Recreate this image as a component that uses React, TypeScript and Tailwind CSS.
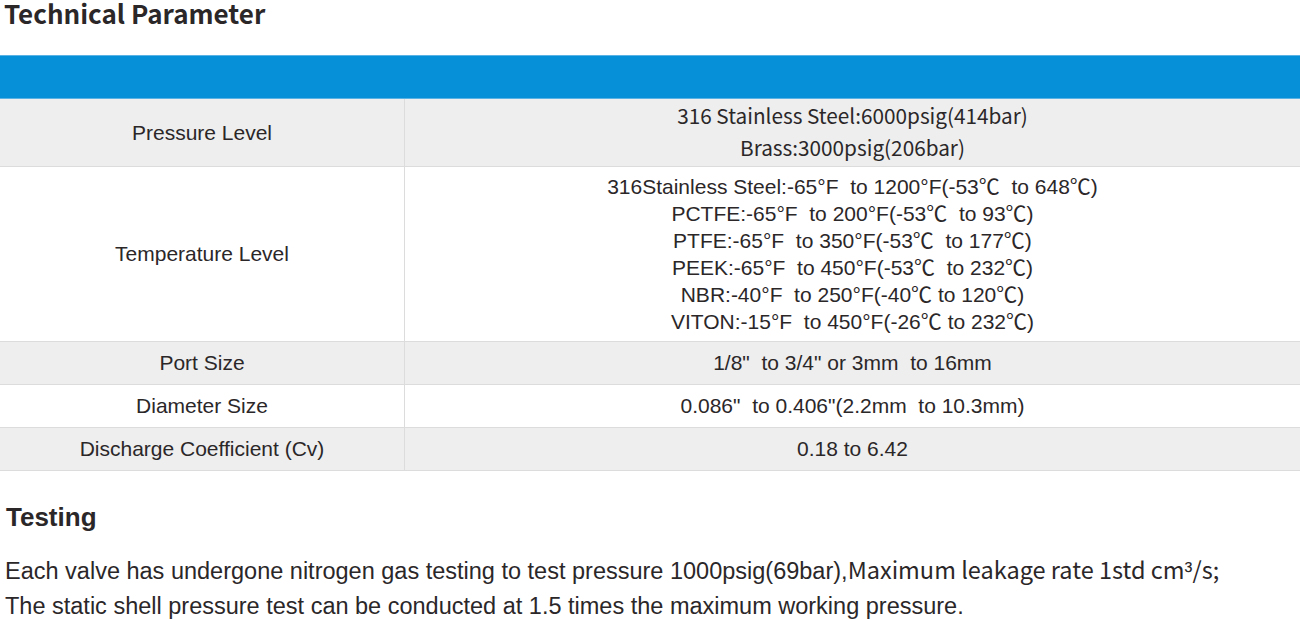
const arial = "font-['Liberation_Sans','Noto_Sans_CJK_SC',sans-serif]";
const noto = "font-['Noto_Sans_CJK_SC','Noto_Sans',sans-serif]";

const tempLines = [
  "316Stainless Steel:-65°F  to 1200°F(-53℃  to 648℃)",
  "PCTFE:-65°F  to 200°F(-53℃  to 93℃)",
  "PTFE:-65°F  to 350°F(-53℃  to 177℃)",
  "PEEK:-65°F  to 450°F(-53℃  to 232℃)",
  "NBR:-40°F  to 250°F(-40℃ to 120℃)",
  "VITON:-15°F  to 450°F(-26℃ to 232℃)",
];

function Row({ label, shaded, children, h }: { label: string; shaded?: boolean; children: React.ReactNode; h: string }) {
  return (
    <div className={`grid grid-cols-[405px_1fr] border-b border-[#dcdcdc] ${h} ${shaded ? "bg-[#eeeeee]" : "bg-white"}`}>
      <div className={`flex items-center justify-center border-r border-[#dcdcdc] text-[21px] ${arial}`}>{label}</div>
      <div className="flex flex-col items-center justify-center">{children}</div>
    </div>
  );
}

export default function App() {
  return (
    <div className="w-[1300px] h-[620px] bg-white text-[#2b2729] overflow-hidden">
      <h2 className={`${noto} font-bold text-[26px] leading-[26px] pl-[4px]`}>Technical Parameter</h2>
      <div className="mt-[29px] h-[44px] bg-[#0590d8] border-y border-[#5ab2e4]" />
      <Row label="Pressure Level" shaded h="h-[68px]">
        <div className={`${noto} text-[20.75px] leading-[32px] text-center -mt-[3px]`}>
          <div>316 Stainless Steel:6000psig(414bar)</div>
          <div>Brass:3000psig(206bar)</div>
        </div>
      </Row>
      <Row label="Temperature Level" h="h-[175px]">
        <div className={`${arial} text-[21px] leading-[27px] text-center whitespace-pre`}>
          {tempLines.map((l) => (
            <div key={l}>{l}</div>
          ))}
        </div>
      </Row>
      <Row label="Port Size" shaded h="h-[43px]">
        <div className={`${arial} text-[21px] whitespace-pre`}>1/8"  to 3/4" or 3mm  to 16mm</div>
      </Row>
      <Row label="Diameter Size" h="h-[43px]">
        <div className={`${arial} text-[21px] whitespace-pre`}>0.086"  to 0.406"(2.2mm  to 10.3mm)</div>
      </Row>
      <Row label="Discharge Coefficient (Cv)" shaded h="h-[43px]">
        <div className={`${arial} text-[21px]`}>0.18 to 6.42</div>
      </Row>
      <h3 className={`${arial} font-bold text-[26px] leading-[30px] pl-[6px] mt-[31px]`}>Testing</h3>
      <div className={`${arial} text-[23.5px] leading-[35px] pl-[5px] mt-[20px]`}>
        <p>
          Each valve has undergone nitrogen gas testing to test pressure 1000psig(69bar),
          <span className={noto}>
            Maximum leakage rate 1std cm<span className={arial}>³</span>/s;
          </span>
        </p>
        <p>The static shell pressure test can be conducted at 1.5 times the maximum working pressure.</p>
      </div>
    </div>
  );
}
